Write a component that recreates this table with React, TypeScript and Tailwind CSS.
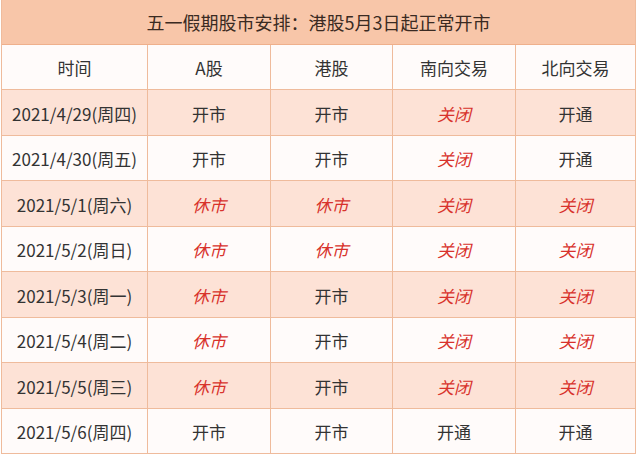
import React from 'react';

type Row = { date: string; a: string; hk: string; south: string; north: string };

const rows: Row[] = [
  { date: '2021/4/29(周四)', a: '开市', hk: '开市', south: '关闭', north: '开通' },
  { date: '2021/4/30(周五)', a: '开市', hk: '开市', south: '关闭', north: '开通' },
  { date: '2021/5/1(周六)', a: '休市', hk: '休市', south: '关闭', north: '关闭' },
  { date: '2021/5/2(周日)', a: '休市', hk: '休市', south: '关闭', north: '关闭' },
  { date: '2021/5/3(周一)', a: '休市', hk: '开市', south: '关闭', north: '关闭' },
  { date: '2021/5/4(周二)', a: '休市', hk: '开市', south: '关闭', north: '关闭' },
  { date: '2021/5/5(周三)', a: '休市', hk: '开市', south: '关闭', north: '关闭' },
  { date: '2021/5/6(周四)', a: '开市', hk: '开市', south: '开通', north: '开通' },
];

const isClosed = (v: string) => v === '休市' || v === '关闭';

const Cell: React.FC<{ value: string; last?: boolean }> = ({ value, last }) => (
  <div
    className={`flex items-center justify-center pt-[2px] border-b border-[#efbb9c] ${last ? '' : 'border-r'} ${
      isClosed(value) ? 'text-[#d8322c] italic' : 'text-[#333333]'
    }`}
  >
    {value}
  </div>
);

export default function App() {
  return (
    <div
      className="w-[640px] h-[456px] bg-white pl-[1px] pr-[4px]"
      style={{ fontFamily: '"Noto Sans CJK SC", "Noto Sans", sans-serif' }}
    >
      <div className="border-l border-r border-[#efbb9c] text-[17px]">
        {/* Title */}
        <div className="h-[45px] flex items-center justify-center bg-[#f8c6a9] border-b border-[#efb08c] text-[18px] text-[#3a2a22]">
          五一假期股市安排：港股5月3日起正常开市
        </div>

        {/* Header */}
        <div className="grid grid-cols-[146px_123px_122px_123px_1fr] h-[45px] bg-[#fffbfa] text-[#333333]">
          <div className="flex items-center justify-center pt-[2px] border-r border-b border-[#efbb9c]">时间</div>
          <div className="flex items-center justify-center pt-[2px] border-r border-b border-[#efbb9c]">A股</div>
          <div className="flex items-center justify-center pt-[2px] border-r border-b border-[#efbb9c]">港股</div>
          <div className="flex items-center justify-center pt-[2px] border-r border-b border-[#efbb9c]">南向交易</div>
          <div className="flex items-center justify-center pt-[2px] border-b border-[#efbb9c]">北向交易</div>
        </div>

        {rows.map((r, i) => (
          <div
            key={r.date}
            className={`grid grid-cols-[146px_123px_122px_123px_1fr] h-[45.5px] ${
              i % 2 === 0 ? 'bg-[#fde2d6]' : 'bg-[#fffbfa]'
            }`}
          >
            <div className="flex items-center justify-center pt-[2px] border-r border-b border-[#efbb9c] text-[#333333]">
              {r.date}
            </div>
            <Cell value={r.a} />
            <Cell value={r.hk} />
            <Cell value={r.south} />
            <Cell value={r.north} last />
          </div>
        ))}
      </div>
    </div>
  );
}
